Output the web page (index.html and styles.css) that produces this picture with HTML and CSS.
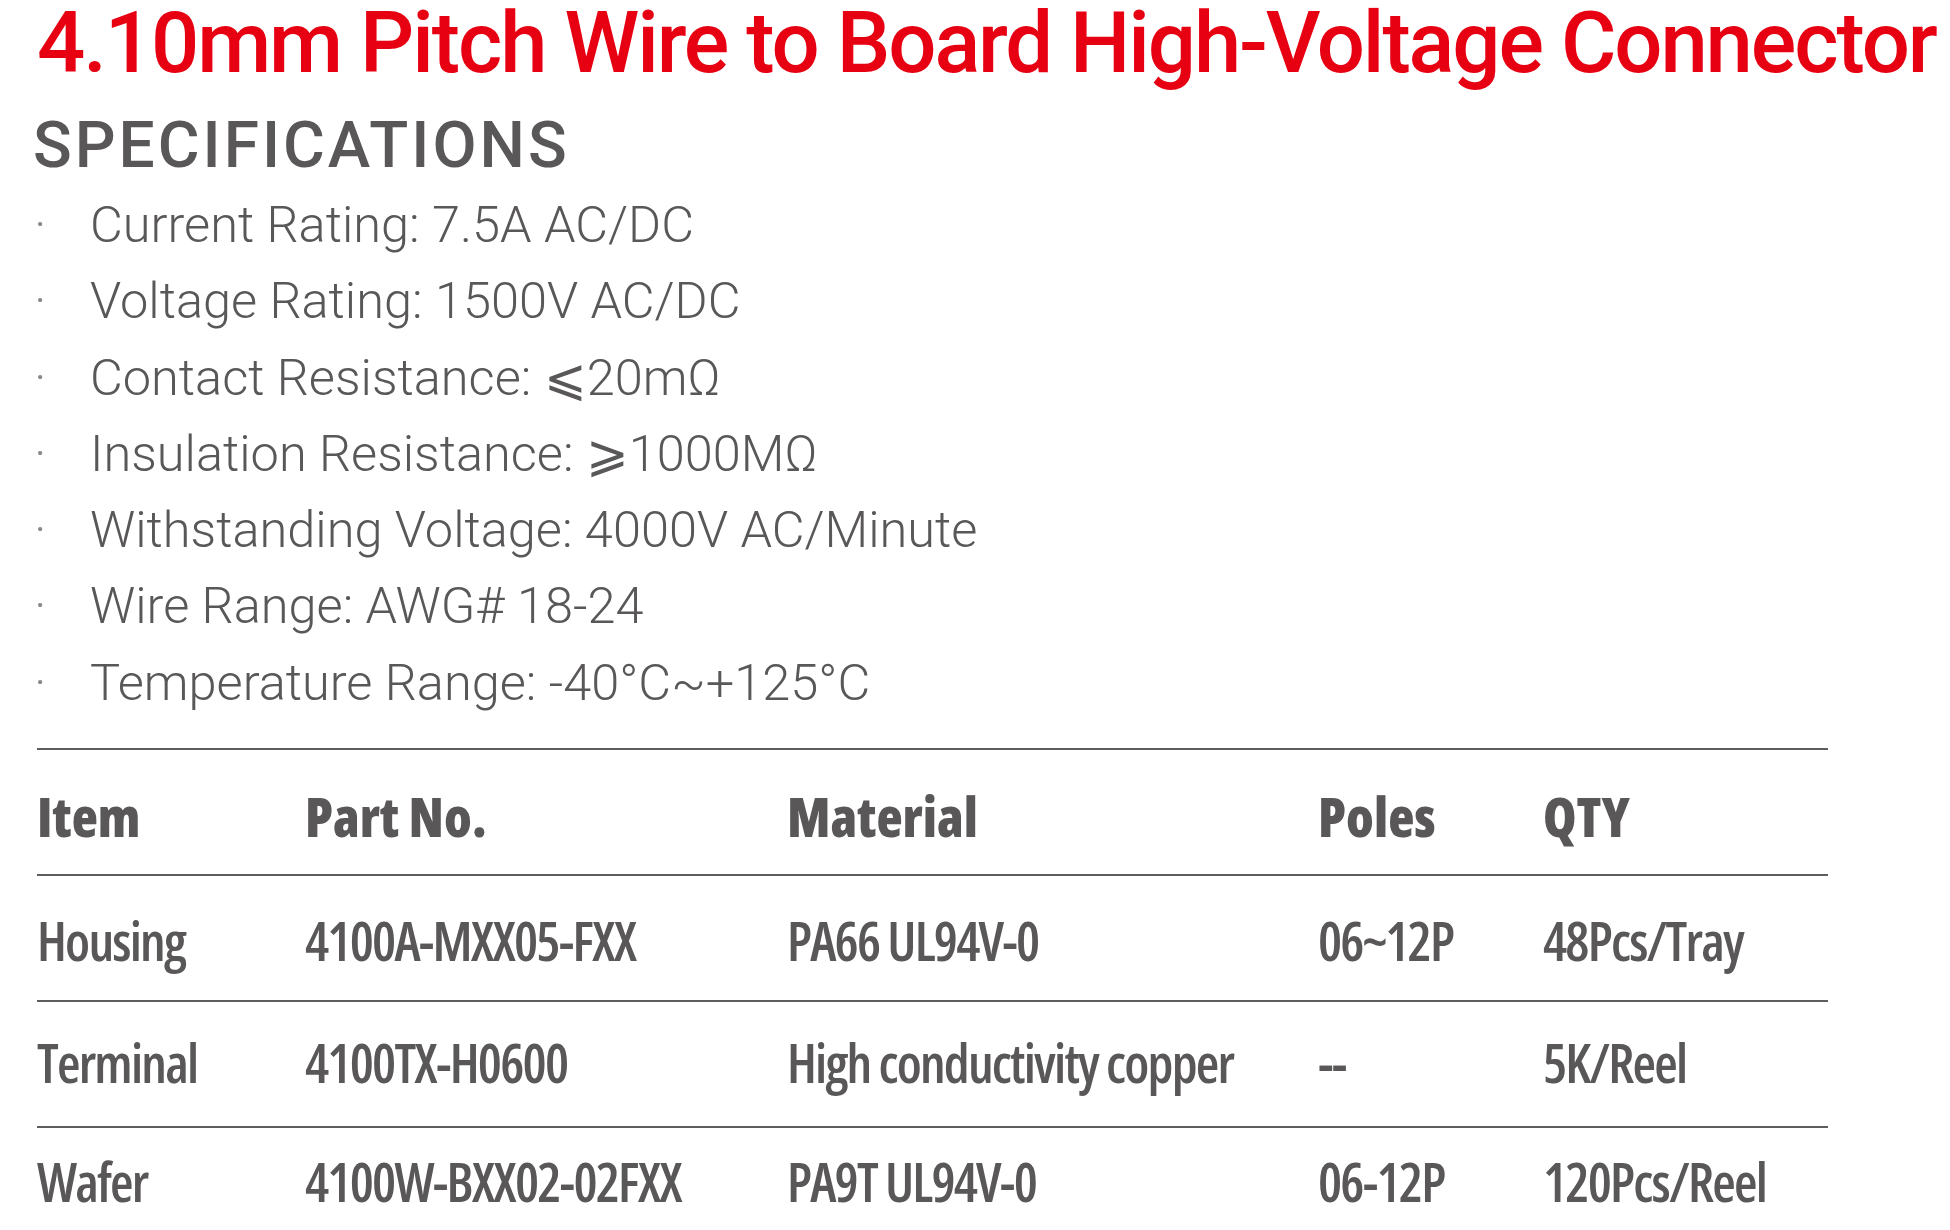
FILE: index.html
```html
<!DOCTYPE html>
<html>
  <head>
    <title>4.10mm Pitch Wire to Board High-Voltage Connector</title>
    <link rel="stylesheet" href="styles.css">
  </head>
  <body>
    <h1 class="title">4.10mm Pitch Wire to Board High-Voltage Connector</h1>
    <h2 class="section">SPECIFICATIONS</h2>
    <ul class="specs">
      <li><span class="dot">·</span>Current Rating: 7.5A AC/DC</li>
      <li><span class="dot">·</span>Voltage Rating: 1500V AC/DC</li>
      <li><span class="dot">·</span>Contact Resistance: ⩽20mΩ</li>
      <li><span class="dot">·</span>Insulation Resistance: ⩾1000MΩ</li>
      <li><span class="dot">·</span>Withstanding Voltage: 4000V AC/Minute</li>
      <li><span class="dot">·</span>Wire Range: AWG# 18-24</li>
      <li><span class="dot">·</span>Temperature Range: -40°C~+125°C</li>
    </ul>
    <table class="parts">
      <colgroup>
        <col class="c-item">
        <col class="c-part">
        <col class="c-mat">
        <col class="c-poles">
        <col class="c-qty">
      </colgroup>
      <thead>
        <tr>
          <th>Item</th>
          <th>Part No.</th>
          <th>Material</th>
          <th>Poles</th>
          <th>QTY</th>
        </tr>
      </thead>
      <tbody>
        <tr>
          <td>Housing</td>
          <td>4100A-MXX05-FXX</td>
          <td>PA66 UL94V-0</td>
          <td>06~12P</td>
          <td>48Pcs/Tray</td>
        </tr>
        <tr>
          <td>Terminal</td>
          <td>4100TX-H0600</td>
          <td>High conductivity copper</td>
          <td>--</td>
          <td>5K/Reel</td>
        </tr>
        <tr>
          <td>Wafer</td>
          <td>4100W-BXX02-02FXX</td>
          <td>PA9T UL94V-0</td>
          <td>06-12P</td>
          <td>120Pcs/Reel</td>
        </tr>
      </tbody>
    </table>
  </body>
</html>
```

FILE: styles.css
```css
body {
  margin: 0;
  padding: 1px 0 0 37px;
  background-color: #ffffff;
  color: #595757;
  font-family: "Liberation Sans", Arial, sans-serif;
  overflow: hidden;
}
.title {
  margin: 0;
  font-family: Roboto, "Liberation Sans", sans-serif;
  font-size: 85px;
  line-height: 85px;
  font-weight: 500;
  letter-spacing: -2.1px;
  color: #e60012;
  white-space: nowrap;
}
.section {
  margin: 28px 0 0 -4px;
  font-family: Roboto, "Liberation Sans", sans-serif;
  font-size: 64px;
  line-height: 64px;
  font-weight: 500;
  letter-spacing: 3px;
}
.specs {
  list-style: none;
  margin: 9px 0 0 -3px;
  padding: 0;
  font-family: Roboto, "Liberation Sans", sans-serif;
  font-weight: 300;
  font-size: 50.5px;
  line-height: 76.3px;
}
.specs li {
  display: flex;
}
.dot {
  width: 56px;
  color: #8a8888;
}
.parts {
  margin-top: 27px;
  width: 1791px;
  border-collapse: collapse;
  border-top: 2px solid #5e5c5c;
  font-family: "Open Sans", sans-serif;
  font-stretch: 75%;
  font-size: 54px;
  text-align: left;
}
.c-item { width: 268px; }
.c-part { width: 482px; }
.c-mat { width: 531px; }
.c-poles { width: 225px; }
.parts th,
.parts td {
  padding: 0;
  line-height: 100px;
  vertical-align: top;
  white-space: nowrap;
}
.parts th {
  padding: 16px 0 8px;
  font-weight: 800;
}
.parts td {
  padding: 10px 0 14px;
  font-weight: 600;
  letter-spacing: -1.8px;
}
.parts tbody tr:first-child td {
  padding: 14px 0 10px;
}
.parts tbody tr:last-child td {
  padding: 3px 0 21px;
}
.parts thead tr,
.parts tbody tr {
  border-bottom: 2px solid #5e5c5c;
}
.parts tbody tr:last-child {
  border-bottom: none;
}
```
